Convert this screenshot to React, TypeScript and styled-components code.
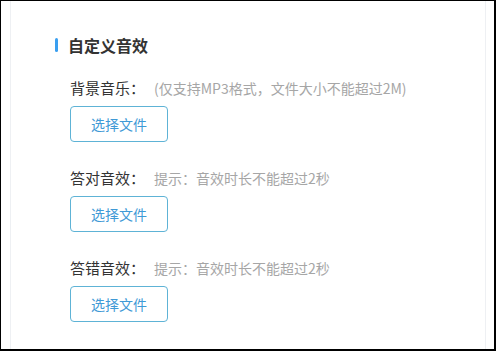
import React from "react";
import styled, { createGlobalStyle } from "styled-components";

const Global = createGlobalStyle`
  html, body { margin: 0; padding: 0; background: #fff; }
  body { font-family: "Noto Sans CJK SC", "Noto Sans", sans-serif; }
`;

const Frame = styled.div`
  box-sizing: border-box;
  width: 496px;
  height: 351px;
  border: 1px solid #000;
  border-right-width: 2px;
  border-bottom-width: 2px;
  background: #fff;
  padding: 0 8px 0 9px;
`;

const Card = styled.div`
  box-sizing: border-box;
  height: 100%;
  border-left: 1px solid #eef0f3;
  border-right: 1px solid #eef0f3;
  padding: 32px 0 0 44px;
`;

const Title = styled.h2`
  display: flex;
  align-items: center;
  gap: 10px;
  margin: 0 0 19px 0;
  font-size: 16px;
  font-weight: 700;
  line-height: 24px;
  color: #333;
  &::before {
    content: "";
    display: block;
    width: 3px;
    height: 14px;
    border-radius: 2px;
    background: #3a9ff0;
  }
`;

const Section = styled.div`
  display: flex;
  flex-direction: column;
  gap: 6px;
  padding-left: 15px;
  margin-bottom: 24px;
`;

const LabelRow = styled.div`
  display: flex;
  align-items: baseline;
  height: 24px;
  line-height: 24px;
`;

const Label = styled.span`
  font-size: 15px;
  color: #333;
  width: 84px;
`;

const Hint = styled.span`
  font-size: 14px;
  color: #a6a6a6;
`;

const FileButton = styled.button`
  box-sizing: border-box;
  display: block;
  width: 98px;
  height: 36px;
  border: 1px solid #5eb3d6;
  border-radius: 4px;
  background: #fff;
  color: #3f9ad6;
  font-family: inherit;
  font-size: 14px;
  cursor: pointer;
  padding: 0;
`;

const items = [
  { label: "背景音乐：", hint: "(仅支持MP3格式，文件大小不能超过2M)" },
  { label: "答对音效：", hint: "提示：音效时长不能超过2秒" },
  { label: "答错音效：", hint: "提示：音效时长不能超过2秒" },
];

export default function App() {
  return (
    <>
      <Global />
      <Frame>
        <Card>
          <Title>自定义音效</Title>
          {items.map((it) => (
            <Section key={it.label}>
              <LabelRow>
                <Label>{it.label}</Label>
                <Hint>{it.hint}</Hint>
              </LabelRow>
              <FileButton>选择文件</FileButton>
            </Section>
          ))}
        </Card>
      </Frame>
    </>
  );
}
